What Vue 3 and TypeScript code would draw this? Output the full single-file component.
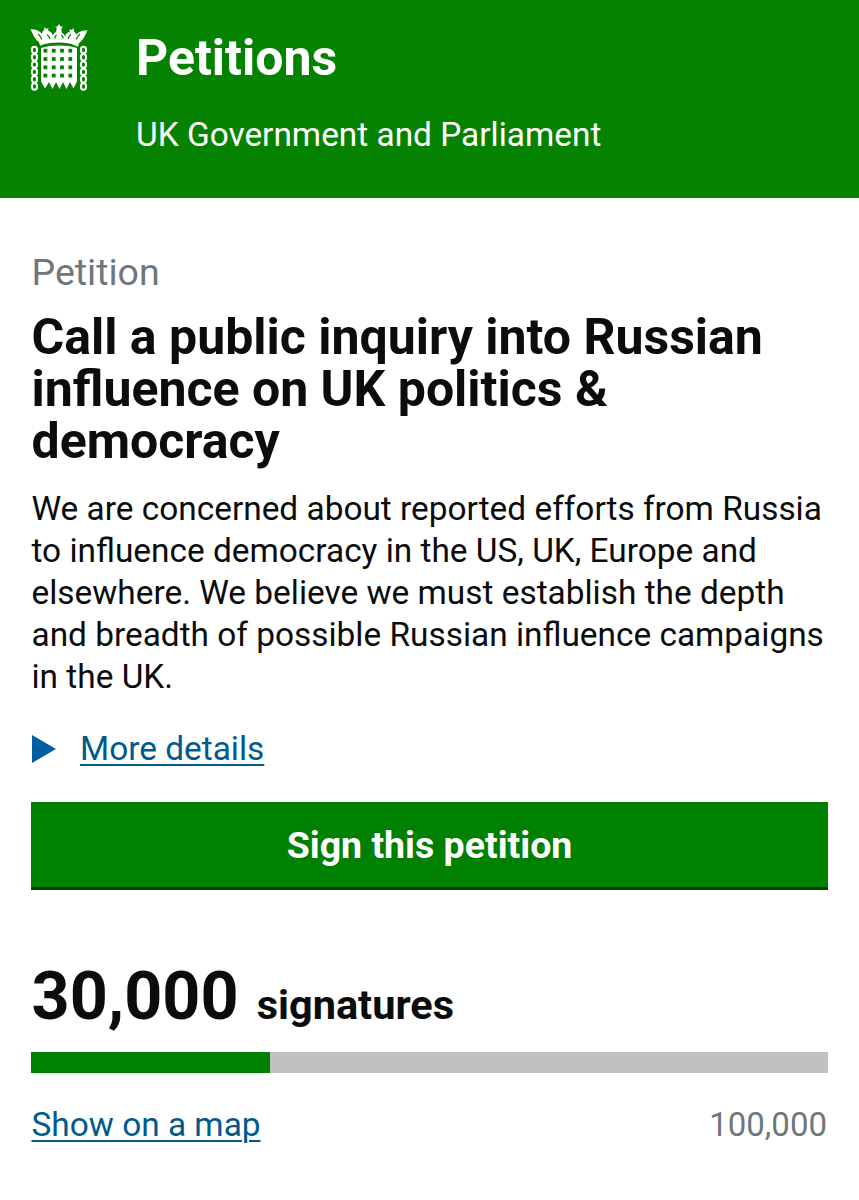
<script setup lang="ts">
const cols: number[] = [0, 1, 2, 3];
const rows: number[] = [0, 1, 2, 3];
const links: number[] = [0, 1, 2, 3, 4, 5];
const signatures = 30000;
const goal = 100000;
const pct = (signatures / goal) * 100;
</script>

<template>
  <div class="page">
    <header class="head">
      <svg class="logo" viewBox="0 0 58 68" aria-hidden="true">
        <path fill="#fff" d="M29 0l1.600 2.400 2.400.2-1.700 2.200.6 4.200c1.500.6 2.600 1.800 3.100 3.400 1-2.600 2.800-4.200 5-4.800L39.500 5l2.300 1 1.700-2 .4 3.200c1.300.8 2 2 2.100 3.600 2-2.200 4.800-3.600 8-4.200l3.500-.4-3 6.200c-1.200 2.500-3 4.600-5.400 6.600l-1.200 3.800-3-1.200C41 19.300 35.500 18.600 29 18.600s-12 .7-15.900 2L10.100 21.800l-1.200-3.800C6.500 16 4.700 13.900 3.500 11.400L.5 5.200 4 5.600c3.200.6 6 2 8 4.200.1-1.600.8-2.800 2.100-3.600l.4-3.200 1.700 2 2.300-1-.5 2.600c2.200.6 4 2.200 5 4.800.5-1.600 1.600-2.800 3.100-3.400l.6-4.200L25 2.600l2.400-.2z" />
        <path fill="none" stroke="#058300" stroke-width="1.300" d="M8 10c2 1.500 3 3 3.800 5.500M50 10c-2 1.500-3 3-3.800 5.500M17 10.500c1.800 1.200 2.600 2.700 3 4.500M41 10.500c-1.800 1.200-2.600 2.700-3 4.500M26.500 11c-1 1-1.500 2-1.600 3.500M31.500 11c1 1 1.500 2 1.600 3.500" />
        <path fill="#fff" d="M11 24c5-1.700 11-2.500 18-2.500S42 22.300 47 24v33.500L43.500 64.500 40 58 36.500 65 33 58 29.500 65 26 58 22.500 65 19 58 15 64.500 11 57.500z" />
        <g fill="#058300">
          <template v-for="r in rows" :key="r">
            <rect v-for="c in cols" :key="c" :x="13.500 + c * 8.300" :y="24.800 + r * 8.300" width="3.800" height="3.800" />
          </template>
        </g>
        <g fill="none" stroke="#fff" stroke-width="2">
          <ellipse v-for="l in links" :key="'a' + l" cx="4.500" :cy="26 + l * 7.300" rx="2.600" ry="3.200" />
          <ellipse v-for="l in links" :key="'b' + l" cx="53.500" :cy="26 + l * 7.300" rx="2.600" ry="3.200" />
        </g>
      </svg>
      <div class="brand">
        <div class="brand-name">Petitions</div>
        <div class="brand-sub">UK Government and Parliament</div>
      </div>
    </header>

    <main class="main">
      <div class="kicker">Petition</div>
      <h1 class="title">Call a public inquiry into Russian influence on UK politics &amp; democracy</h1>
      <p class="body">We are concerned about reported efforts from Russia to influence democracy in the US, UK, Europe and elsewhere. We believe we must establish the depth and breadth of possible Russian influence campaigns in the UK.</p>

      <div class="details">
        <svg class="arrow" viewBox="0 0 24 28" aria-hidden="true"><path d="M0 0l24 14L0 28z" fill="#005ea5" /></svg>
        <a class="link" href="#">More details</a>
      </div>

      <button class="sign" type="button">Sign this petition</button>

      <div class="count">
        <span class="count-num">30,000</span>
        <span class="count-label">signatures</span>
      </div>
      <div class="bar"><div class="bar-fill" :style="{ width: pct + '%' }"></div></div>
      <div class="foot">
        <a class="link" href="#">Show on a map</a>
        <span class="goal">100,000</span>
      </div>
    </main>
  </div>
</template>

<style>
html, body { background: #fff; }
</style>

<style scoped>
.page {
  width: 859px;
  height: 1200px;
  overflow: hidden;
  font-family: Roboto, "Liberation Sans", sans-serif;
  color: #0b0c0c;
}
.head {
  height: 198px;
  box-sizing: border-box;
  background: #058300;
  color: #fff;
  display: flex;
  padding: 24px 0 0 30px;
  gap: 48px;
}
.logo { width: 58px; height: 68px; flex: none; }
.brand-name { font-size: 50px; font-weight: 700; line-height: 56px; margin-top: 6px; }
.brand-sub { font-size: 33.400px; line-height: 40px; margin-top: 29px; }
.main { padding: 52px 31px 0 31.500px; }
.kicker { font-size: 37.500px; line-height: 44px; color: #6f777b; }
.title { margin: 17px 0 0; font-size: 50px; line-height: 52px; font-weight: 700; }
.body { margin: 21px 0 0; font-size: 33.400px; line-height: 41.900px; }
.details { display: flex; align-items: center; gap: 24.500px; margin-top: 29px; }
.arrow { width: 24px; height: 28px; }
.link { font-size: 33.400px; line-height: 44px; color: #005a8c; text-decoration: underline; text-underline-offset: 4px; text-decoration-thickness: 2px; }
.sign {
  display: block;
  width: 797px;
  height: 88px;
  margin: 31px 0 0 -.5px;
  padding: 2px 0 0;
  border: 0;
  border-bottom: 3px solid #0a3d00;
  background: #008000;
  color: #fff;
  font: 700 37.500px Roboto, sans-serif;
}
.count { display: flex; align-items: baseline; gap: 18px; margin-top: 68px; }
.count-num { font-size: 66.500px; font-weight: 700; line-height: 76px; }
.count-label { font-size: 41.500px; font-weight: 700; }
.bar { width: 797px; height: 21px; margin: 18px 0 0 -.5px; background: #bfc1c3; }
.bar-fill { height: 100%; background: #008000; }
.foot { display: flex; justify-content: space-between; align-items: baseline; margin-top: 30px; width: 795.500px; }
.goal { font-size: 33px; color: #6f777b; }
</style>
